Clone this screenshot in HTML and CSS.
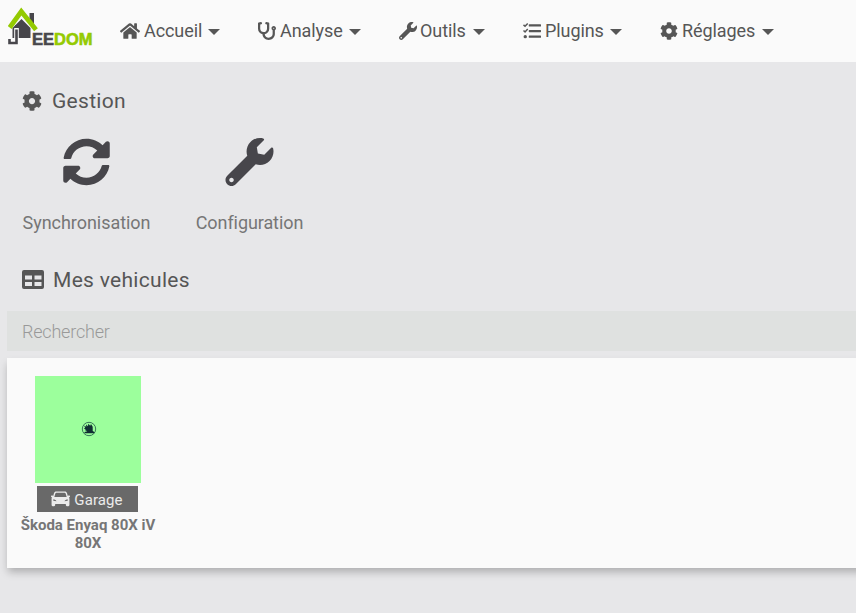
FILE: index.html
```html
<!DOCTYPE html>
<html lang="fr">
<head>
<meta charset="utf-8">
<title>Jeedom</title>
<link rel="stylesheet" href="styles.css">
</head>
<body>
<svg class="defs" aria-hidden="true">
  <symbol id="home" viewBox="0 0 576 512"><path d="M280.37 148.26L96 300.11V464a16 16 0 0 0 16 16l112.06-.29a16 16 0 0 0 15.92-16V368a16 16 0 0 1 16-16h64a16 16 0 0 1 16 16v95.64a16 16 0 0 0 16 16.05L464 480a16 16 0 0 0 16-16V300L295.67 148.26a12.19 12.19 0 0 0-15.3 0zM571.6 251.47L488 182.56V44.05a12 12 0 0 0-12-12h-56a12 12 0 0 0-12 12v72.61L318.47 43a48 48 0 0 0-61 0L4.34 251.47a12 12 0 0 0-1.6 16.9l25.5 31A12 12 0 0 0 45.15 301l235.22-193.74a12.19 12.19 0 0 1 15.3 0L530.9 301a12 12 0 0 0 16.9-1.6l25.5-31a12 12 0 0 0-1.7-16.93z"/></symbol>
  <symbol id="stethoscope" viewBox="0 0 512 512"><path d="M447.1 112c-34.2.5-62.3 28.4-63 62.6-.5 24.3 12.5 45.6 32 56.8V344c0 57.3-50.2 104-112 104-60 0-109.2-44.1-111.9-99.2C265 333.8 320 269.2 320 192V36.6c0-11.4-8.1-21.3-19.3-23.5L237.8.5c-13-2.6-25.6 5.8-28.2 18.8L206.4 35c-2.6 13 5.8 25.6 18.8 28.2l30.7 6.1v121.4c0 52.9-42.2 96.7-95.1 97.2-53.4.5-96.9-42.7-96.9-96V69.4l30.7-6.1c13-2.6 21.4-15.2 18.8-28.2l-3.1-15.7C107.7 6.4 95.1-2 82.1.6L19.3 13C8.1 15.3 0 25.1 0 36.6V192c0 77.3 55.1 142 128.1 156.8C130.7 439.2 208.6 512 304 512c97 0 176-75.4 176-168V231.4c19.1-11.1 32-31.7 32-55.4 0-35.7-29.2-64.5-64.9-64zm.9 80c-8.8 0-16-7.2-16-16s7.2-16 16-16 16 7.2 16 16-7.2 16-16 16z"/></symbol>
  <symbol id="wrench" viewBox="0 0 512 512"><path d="M507.73 109.1c-2.24-9.03-13.54-12.09-20.12-5.51l-74.36 74.36-67.88-11.31-11.31-67.88 74.36-74.36c6.62-6.62 3.43-17.9-5.66-20.16-47.38-11.74-99.55.91-136.58 37.93-39.64 39.64-50.55 97.1-34.05 147.2L18.74 402.76c-24.99 24.99-24.99 65.51 0 90.5 24.99 24.99 65.51 24.99 90.5 0l213.21-213.21c50.12 16.71 107.47 5.68 147.37-34.22 37.07-37.07 49.7-89.32 37.91-136.73zM64 472c-13.25 0-24-10.75-24-24 0-13.26 10.75-24 24-24s24 10.74 24 24c0 13.25-10.75 24-24 24z"/></symbol>
  <symbol id="tasks" viewBox="0 0 512 512"><path d="M180 64h316a16 16 0 0 1 16 16v32a16 16 0 0 1-16 16H180a16 16 0 0 1-16-16V80a16 16 0 0 1 16-16zM180 224h316a16 16 0 0 1 16 16v32a16 16 0 0 1-16 16H180a16 16 0 0 1-16-16v-32a16 16 0 0 1 16-16zM180 384h316a16 16 0 0 1 16 16v32a16 16 0 0 1-16 16H180a16 16 0 0 1-16-16v-32a16 16 0 0 1 16-16z"/><circle cx="64" cy="416" r="48"/><path d="M14 82l44 40 76-82M14 242l44 40 76-82" fill="none" stroke="currentColor" stroke-width="42"/></symbol>
  <symbol id="cog" viewBox="0 0 512 512"><path d="M487.4 315.7l-42.6-24.6c4.3-23.2 4.3-47 0-70.2l42.6-24.6c4.9-2.8 7.1-8.6 5.5-14-11.1-35.6-30-67.8-54.7-94.6-3.8-4.1-10-5.1-14.8-2.3L380.8 110c-17.9-15.4-38.5-27.3-60.8-35.1V25.8c0-5.6-3.9-10.5-9.4-11.7-36.7-8.2-74.3-7.8-109.2 0-5.5 1.2-9.4 6.1-9.4 11.7V75c-22.2 7.9-42.8 19.8-60.8 35.1L88.7 85.5c-4.9-2.8-11-1.9-14.8 2.3-24.7 26.7-43.6 58.9-54.7 94.6-1.7 5.4.6 11.2 5.5 14L67.3 221c-4.3 23.2-4.3 47 0 70.2l-42.6 24.6c-4.9 2.8-7.1 8.6-5.5 14 11.1 35.6 30 67.8 54.7 94.6 3.8 4.1 10 5.1 14.8 2.3l42.6-24.6c17.9 15.4 38.5 27.3 60.8 35.1v49.2c0 5.6 3.9 10.5 9.4 11.7 36.7 8.2 74.3 7.8 109.2 0 5.5-1.2 9.4-6.1 9.4-11.7v-49.2c22.2-7.9 42.8-19.8 60.8-35.1l42.6 24.6c4.9 2.8 11 1.9 14.8-2.3 24.7-26.7 43.6-58.9 54.7-94.6 1.5-5.5-.7-11.3-5.6-14.1zM256 336c-44.1 0-80-35.9-80-80s35.9-80 80-80 80 35.9 80 80-35.9 80-80 80z"/></symbol>
  <symbol id="sync" viewBox="0 0 512 512"><path d="M370.72 133.28C339.458 104.008 298.888 87.962 255.848 88c-77.458.068-144.328 53.178-162.791 126.85-1.344 5.363-6.122 9.15-11.651 9.15H24.103c-7.498 0-13.194-6.807-11.807-14.176C33.933 94.924 134.813 8 256 8c66.448 0 126.791 26.136 171.315 68.685L463.03 40.97C478.149 25.851 504 36.559 504 57.941V192c0 13.255-10.745 24-24 24H345.941c-21.382 0-32.09-25.851-16.971-40.971l41.75-41.749zM32 296h134.059c21.382 0 32.09 25.851 16.971 40.971l-41.75 41.75c31.262 29.273 71.835 45.319 114.876 45.28 77.418-.07 144.315-53.144 162.787-126.849 1.344-5.363 6.122-9.15 11.651-9.15h57.304c7.498 0 13.194 6.807 11.807 14.176C478.067 417.076 377.187 504 256 504c-66.448 0-126.791-26.136-171.315-68.685L48.97 471.03C33.851 486.149 8 475.441 8 454.059V320c0-13.255 10.745-24 24-24z"/></symbol>
  <symbol id="table" viewBox="0 0 22 19"><path fill-rule="evenodd" d="M2 0h18a2 2 0 0 1 2 2v15a2 2 0 0 1-2 2H2a2 2 0 0 1-2-2V2a2 2 0 0 1 2-2zM3 5.500v4h7v-4zM12.500 5.500v4h7v-4zM3 12v4h7v-4zM12.500 12v4h7v-4z"/></symbol>
  <symbol id="car" viewBox="0 0 20 16"><path fill-rule="evenodd" d="M5.500 0h9c1.200 0 2 .6 2.300 1.700l.9 3.200.5-.7h1.100c.4 0 .7.3.7.7v.8l-1 .5c.3.6.4 1.200.4 1.900V14c0 .9-.4 1.500-1.200 1.500h-1.400c-.8 0-1.200-.6-1.200-1.500v-.8H4.400v.8c0 .9-.4 1.500-1.200 1.500H1.800C1 15.500.6 14.900.6 14V8.100c0-.7.1-1.300.4-1.900l-1-.5v-.8c0-.4.3-.7.7-.7h1.100l.5.7.9-3.200C3.500.6 4.300 0 5.500 0zM5.600 1.500c-.5 0-.8.2-1 .7L3.500 6h13l-1.100-3.800c-.2-.5-.5-.7-1-.7zM2.200 8.500l.3 1.300 3.200.6c-.3-1.300-1.600-1.900-3.500-1.900zm15.600 0c-1.900 0-3.200.6-3.500 1.900l3.200-.6z"/></symbol>
</svg>
<header class="navbar">
  <a class="logo">
    <svg class="logo-house" viewBox="0 0 32 40"><path fill="#47464b" d="M21.500 6h4.500v13l-4.500-5zM4.500 21L13.500 12 22.500 21v10H4.500z"/><path fill="none" stroke="#fafafa" stroke-width="4.600" d="M8.500 21v11"/><path fill="none" stroke="#47464b" stroke-width="2.600" d="M8.500 22.500V36H1.500v-4"/><path fill="#47464b" d="M7.200 18h2.600v2.500H7.200z"/><path fill="none" stroke="#94ca02" stroke-width="4.800" d="M1.700 20.500L13.300 4.500 28 22.800"/></svg>
    <span class="logo-text">EE<b>DOM</b></span>
  </a>
  <nav class="menu">
    <a class="item accueil"><svg class="icon home"><use href="#home"/></svg><span>Accueil</span><i class="caret"></i></a>
    <a class="item analyse"><svg class="icon"><use href="#stethoscope"/></svg><span>Analyse</span><i class="caret"></i></a>
    <a class="item outils"><svg class="icon"><use href="#wrench"/></svg><span>Outils</span><i class="caret"></i></a>
    <a class="item plugins"><svg class="icon"><use href="#tasks"/></svg><span>Plugins</span><i class="caret"></i></a>
    <a class="item reglages"><svg class="icon"><use href="#cog"/></svg><span>Réglages</span><i class="caret"></i></a>
  </nav>
</header>
<main>
  <h2 class="legend"><svg class="cog"><use href="#cog"/></svg>Gestion</h2>
  <div class="actions">
    <a class="action"><svg><use href="#sync"/></svg><span>Synchronisation</span></a>
    <a class="action"><svg><use href="#wrench"/></svg><span>Configuration</span></a>
  </div>
  <h2 class="legend vehicles"><svg class="table"><use href="#table"/></svg>Mes vehicules</h2>
  <input class="search" placeholder="Rechercher">
  <section class="panel">
    <article class="vehicle">
      <div class="thumb"><svg class="badge" viewBox="0 0 16 16"><circle cx="8" cy="8" r="6.700" fill="none" stroke="#2c6650" stroke-width=".9"/><path fill="#102d32" d="M3 4.500l2.300 1.300L5 3.500l2 1.700.2-2.400 2 2 .8-1.800 1.700 2.800V10l1.700 1v1.200H3.500V11l2.800-.8L3.800 9l1-.6-2-1.200 1.400-.4z"/></svg></div>
      <div class="room"><svg><use href="#car"/></svg>Garage</div>
      <div class="name">Škoda Enyaq 80X iV 80X</div>
    </article>
  </section>
</main>
</body>
</html>
```
FILE: styles.css
```css
* { box-sizing: border-box; }
body {
  margin: 0;
  height: 613px;
  overflow: hidden;
  background: #e7e7e9;
  color: #565656;
  font-family: Roboto, sans-serif;
}
svg { display: block; flex: none; fill: currentColor; }
.defs { display: none; }
.navbar { display: flex; height: 62px; background: #fafafa; }
.logo { display: flex; width: 120px; padding: 7px 0 0 8px; }
.logo-house { width: 32px; height: 40px; }
.logo-text {
  margin: 22px 0 0 -8px;
  color: #47464b;
  font: 700 16.500px/20px "Liberation Sans", sans-serif;
  -webkit-text-stroke: .6px currentColor;
}
.logo-text b { color: #94ca02; }
.menu { display: flex; height: 61px; align-items: center; font-size: 18px; line-height: 24px; letter-spacing: -.08px; }
.item { display: flex; align-items: center; }
.accueil { width: 138px; }
.analyse { width: 141px; }
.outils { width: 124px; }
.plugins { width: 137px; }
.icon { width: 18px; height: 18px; margin-right: 4px; }
.icon.home { width: 20px; }
.outils .icon { margin-right: 3px; }
.caret { margin: 2px 0 0 6px; border: 6px solid transparent; border-top-color: currentColor; border-bottom: 0; }
.outils .caret, .reglages .caret { margin-left: 7px; }
.legend {
  display: flex;
  align-items: center;
  height: 28px;
  margin: 25px 0 0 22px;
  font-size: 21px;
  font-weight: 400;
  letter-spacing: .3px;
}
.legend .cog { width: 20px; height: 20px; margin: -1px 10px 0 0; }
.legend .table { width: 22px; height: 19px; margin: -1px 9px 0 0; }
.actions { display: flex; gap: 33px; margin: 23px 0 0 16px; }
.action {
  display: flex;
  flex-direction: column;
  align-items: center;
  width: 141px;
  color: #767676;
  font-size: 18px;
  line-height: 24px;
  letter-spacing: -.04px;
}
.action:nth-child(2) { width: 119px; letter-spacing: -.08px; }
.action svg { width: 49px; height: 48px; margin-bottom: 25px; color: #47464b; }
.legend.vehicles { margin-top: 31px; }
.search {
  display: block;
  width: 849px;
  height: 40px;
  margin: 17px 0 7px 7px;
  padding: 0 15px;
  border: 0;
  background: #dfe1e0;
  font: 300 18px Roboto, sans-serif;
  letter-spacing: -.2px;
}
.search::placeholder { color: #999; opacity: 1; }
.panel {
  height: 210px;
  margin: 0 -20px 0 7px;
  padding: 18px 11px;
  background: #fafafa;
  box-shadow: 0 5px 8px -1px rgba(0, 0, 0, .25);
}
.vehicle { display: flex; flex-direction: column; align-items: center; width: 140px; }
.thumb { display: grid; place-items: center; width: 106px; height: 107px; background: #9cff9c; }
.badge { width: 16px; height: 16px; margin: -1px 0 0 1px; }
.room {
  display: flex;
  align-items: center;
  justify-content: center;
  gap: 4px;
  width: 101px;
  height: 26px;
  margin: 3px 2px 4px 0;
  padding-top: 1px;
  background: #696969;
  color: #ebebeb;
  font-size: 15px;
  letter-spacing: .1px;
}
.room svg { width: 19px; height: 16px; margin-top: -2px; }
.name { color: #767676; font-size: 15px; font-weight: 700; line-height: 18px; text-align: center; }
```
